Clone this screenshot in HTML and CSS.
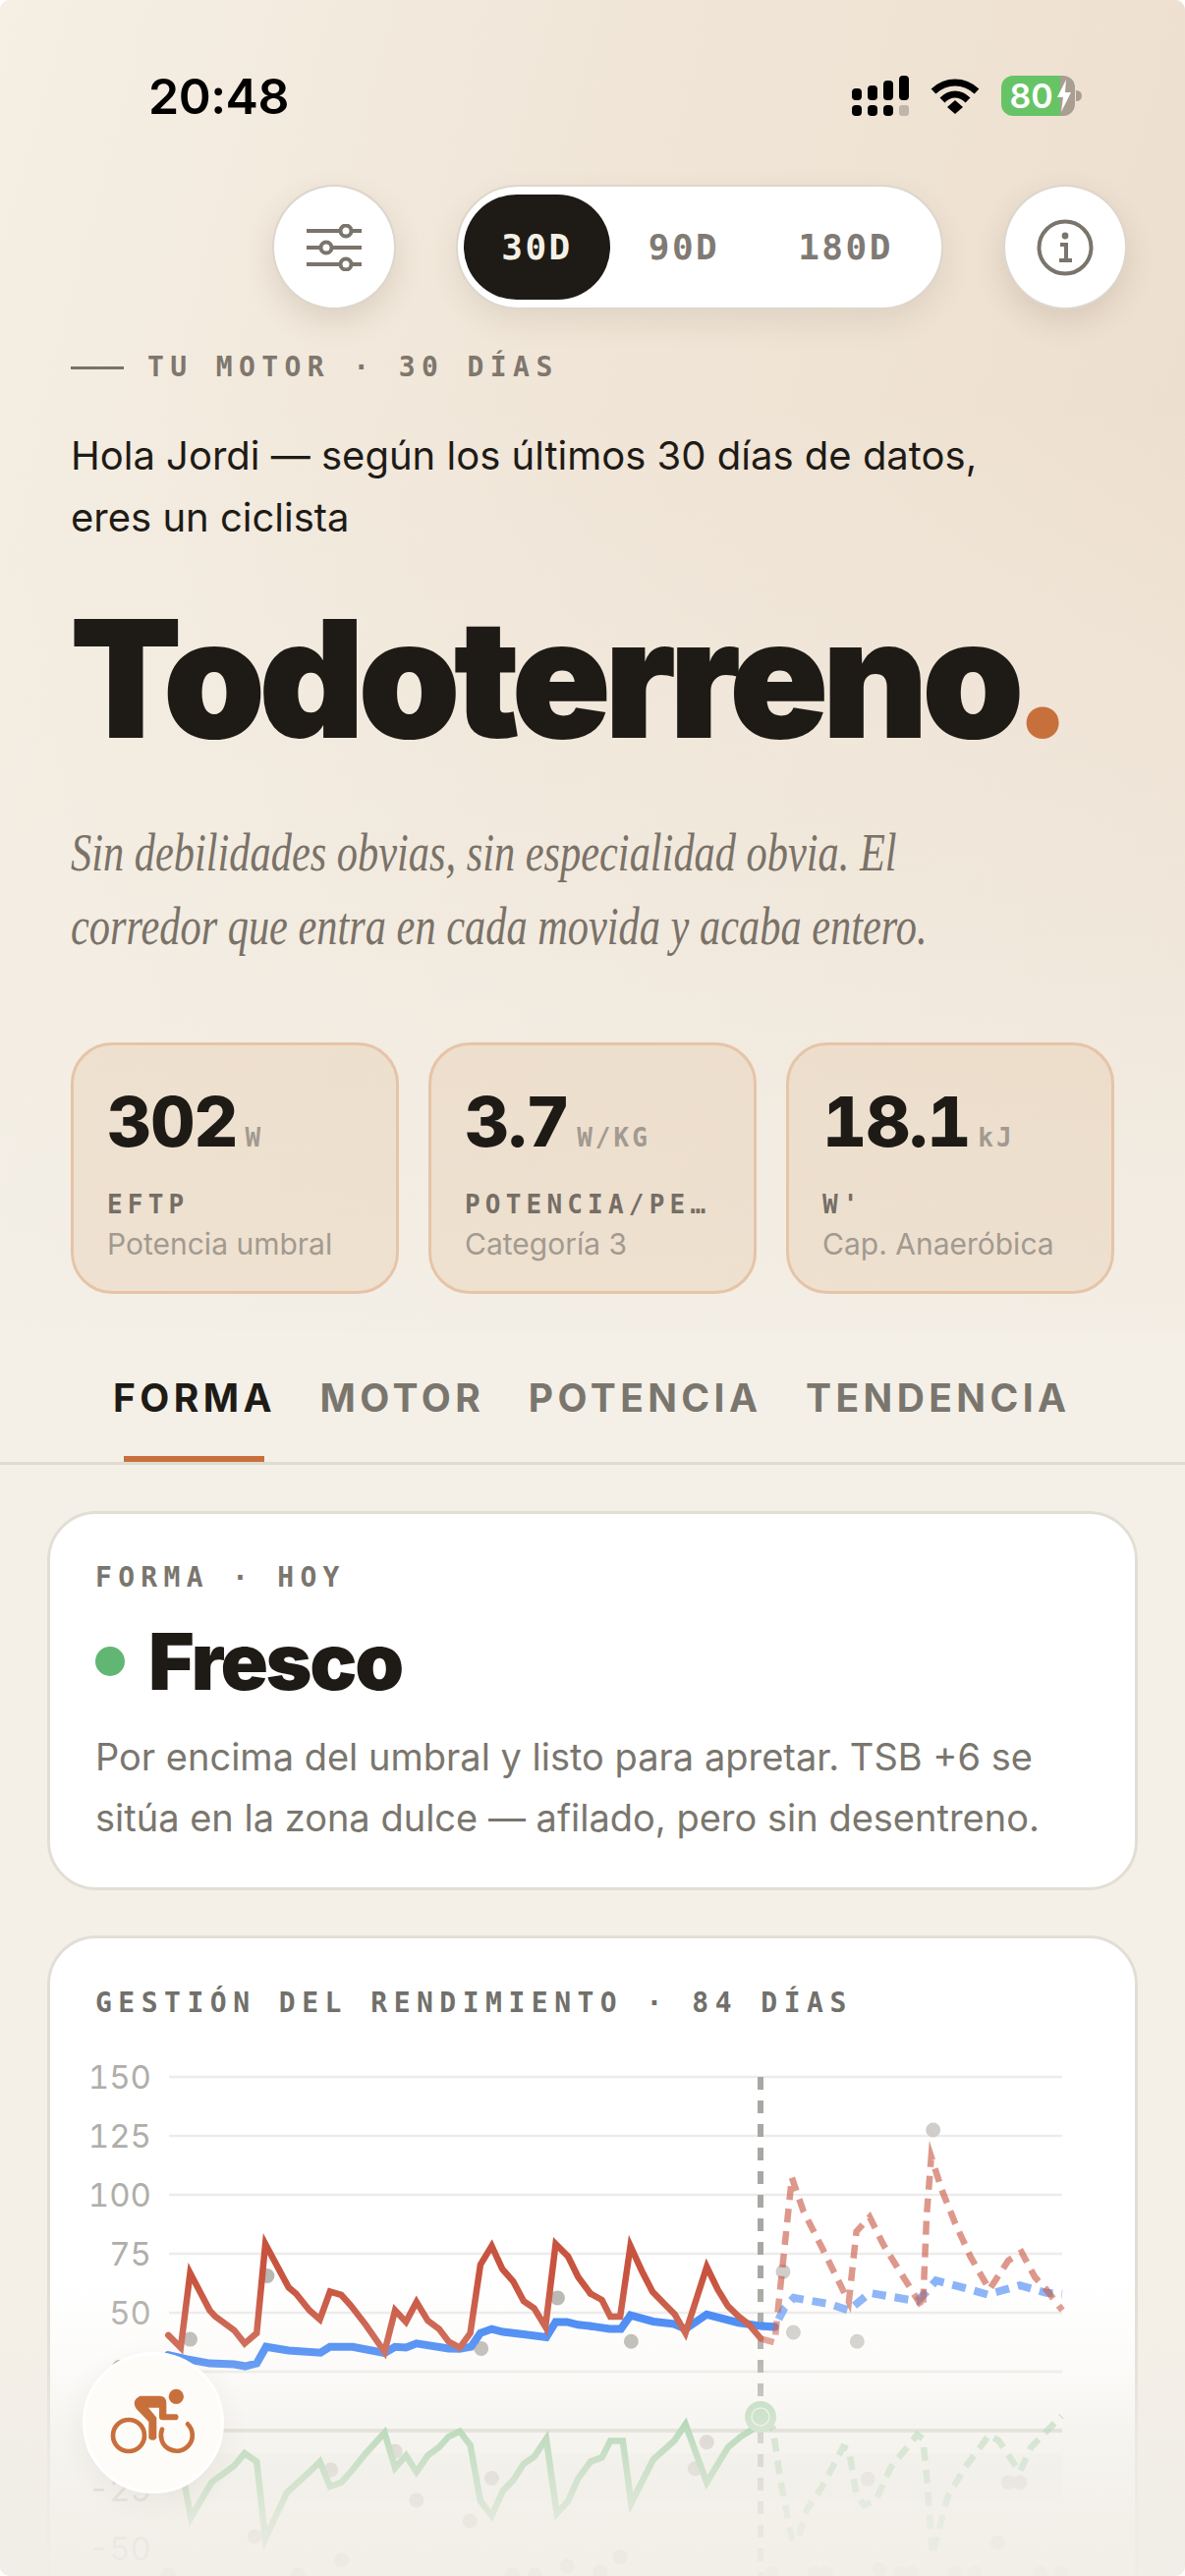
FILE: index.html
```html
<!DOCTYPE html>
<html lang="es">
<head>
<meta charset="utf-8">
<title>Tu motor</title>
<link rel="stylesheet" href="styles.css">
</head>
<body>
<div class="screen">
  <section class="hero">
    <div class="status">
      <span class="time">20:48</span>
      <div class="status-icons">
        <svg class="signal" width="58" height="41" viewBox="0 0 58 41">
          <rect x="0" y="13" width="10" height="12" rx="4"/><rect x="16" y="10" width="10" height="15" rx="4"/><rect x="32" y="5" width="10" height="20" rx="4"/><rect x="48" y="0" width="10" height="25" rx="4"/>
          <rect x="0" y="30" width="10" height="11" rx="4"/><rect x="16" y="30" width="10" height="11" rx="4"/><rect x="32" y="30" width="10" height="11" rx="4"/><rect class="signal-off" x="48" y="30" width="10" height="11" rx="3"/>
        </svg>
        <svg class="wifi" width="50" height="38" viewBox="0 0 50 38">
          <path d="M3 14C16 2 34 2 47 14" /><path d="M12 23C20 15 30 15 38 23"/><path class="wifi-dot" d="M17 30L25 23L33 30L25 37Z"/>
        </svg>
        <div class="battery">
          <span class="battery-num">80</span>
          <svg class="bolt" width="14" height="33" viewBox="0 0 14 33"><path d="M9 0L0 18H6L4 33L14 13H8Z"/></svg>
          <i class="battery-tip"></i>
        </div>
      </div>
    </div>

    <div class="controls">
      <button class="round-btn" aria-label="Filtros">
        <svg width="58" height="48" viewBox="0 0 58 48">
          <path class="ico" d="M1 7H35M47 7H57M1 24H15M27 24H57M1 41H35M47 41H57"/>
          <circle class="ico" cx="41" cy="7" r="5.5"/><circle class="ico" cx="21" cy="24" r="5.5"/><circle class="ico" cx="41" cy="41" r="5.5"/>
        </svg>
      </button>
      <div class="segment">
        <span class="seg seg-active">30D</span>
        <span class="seg seg-90">90D</span>
        <span class="seg seg-180">180D</span>
      </div>
      <button class="round-btn" aria-label="Información">
        <svg width="58" height="58" viewBox="0 0 58 58">
          <circle class="ico" cx="29" cy="29" r="26.5"/>
          <circle class="ico-fill" cx="29" cy="17" r="3.4"/>
          <path class="ico" d="M24 26H30V41M23 42H36"/>
        </svg>
      </button>
    </div>

    <div class="eyebrow"><i class="eyebrow-line"></i><span>TU MOTOR · 30 DÍAS</span></div>
    <p class="intro">Hola Jordi — según los últimos 30 días de datos,<br>eres un ciclista</p>
    <h1 class="title">Todoterreno<span class="title-dot">.</span></h1>
    <p class="tagline"><span class="tag-line">Sin debilidades obvias, sin especialidad obvia. El</span><br><span class="tag-line">corredor que entra en cada movida y acaba entero.</span></p>

    <div class="stats">
      <div class="stat">
        <div class="stat-value">302<span class="stat-unit">W</span></div>
        <div class="stat-label">EFTP</div>
        <div class="stat-sub">Potencia umbral</div>
      </div>
      <div class="stat">
        <div class="stat-value">3.7<span class="stat-unit">W/KG</span></div>
        <div class="stat-label">POTENCIA/PE…</div>
        <div class="stat-sub">Categoría 3</div>
      </div>
      <div class="stat">
        <div class="stat-value">18.1<span class="stat-unit">kJ</span></div>
        <div class="stat-label">W'</div>
        <div class="stat-sub">Cap. Anaeróbica</div>
      </div>
    </div>
  </section>

  <nav class="tabs">
    <span class="tab tab-active">FORMA</span>
    <span class="tab">MOTOR</span>
    <span class="tab">POTENCIA</span>
    <span class="tab">TENDENCIA</span>
  </nav>

  <main class="content">
    <article class="card card-form">
      <div class="card-kicker">FORMA · HOY</div>
      <div class="form-head"><i class="form-dot"></i><h2 class="form-title">Fresco</h2></div>
      <p class="form-text">Por encima del umbral y listo para apretar. TSB +6 se<br>sitúa en la zona dulce — afilado, pero sin desentreno.</p>
    </article>

    <article class="card card-chart">
      <div class="chart-title">GESTIÓN DEL RENDIMIENTO · 84 DÍAS</div>
      <svg class="chart" width="1106" height="560" viewBox="50 2090 1106 560">
        <rect class="zone" x="171" y="2498" width="909" height="49"/>
        <g class="grid">
          <path d="M171 2115H1080M171 2175H1080M171 2235H1080M171 2295H1080M171 2355H1080M171 2415H1080"/>
        </g>
        <path class="zero" d="M171 2475H1080"/>
        <g class="ylab">
          <text x="153" y="2127">150</text><text x="153" y="2187">125</text><text x="153" y="2247">100</text><text x="153" y="2307">75</text><text x="153" y="2367">50</text><text x="153" y="2427">25</text><text x="153" y="2487">0</text><text x="153" y="2547">-25</text><text x="153" y="2607">-50</text>
        </g>
        <path class="today" d="M773 2115V2640"/>

        <g transform="translate(0 1960) scale(.3827 .42212)">
          <path class="dots dots-past" d="M503 1000h.01M708 847h.01M1480 900h.01M1277 1022h.01M380 1090h.01M1048 1270h.01M877 1315h.01M1105 1388h.01M1305 1335h.01M1247 1438h.01M675 1475h.01M905 1532h.01M1505 1547h.01M1360 1568h.01M1420 1568h.01M790 1568h.01M445 1568h.01"/>
          <polyline class="ln ln-green" points="445,1230 478,1300 505,1430 560,1345 620,1305 648,1275 680,1295 703,1480 760,1370 820,1320 848,1295 875,1355 905,1345 930,1320 970,1275 1020,1225 1048,1310 1077,1280 1105,1320 1135,1280 1165,1260 1190,1235 1220,1222 1248,1255 1275,1390 1305,1425 1335,1365 1362,1340 1390,1300 1418,1283 1450,1240 1478,1420 1508,1390 1535,1335 1568,1295"/>
          <polyline class="ln ln-blue" points="445,1038 495,1048 555,1058 620,1060 650,1065 680,1058 705,1018 765,1027 850,1032 875,1018 935,1018 1020,1033 1048,1018 1077,1020 1105,1010 1190,1022 1220,1023 1250,1018 1275,985 1305,975 1335,982 1390,988 1450,995 1475,958 1505,958 1535,965 1568,968"/>
          <polyline class="ln ln-red" points="445,990 478,1020 503,840 555,930 570,945 620,978 648,1010 680,985 703,770 765,875 785,890 820,930 848,952 875,885 905,893 930,918 970,965 1020,1030 1048,930 1077,958 1105,910 1135,955 1165,975 1190,1005 1220,1020 1248,985 1275,820 1305,775 1333,830 1362,860 1390,908 1418,925 1448,970 1475,770 1508,800 1535,850 1568,890"/>
        </g>
        <g transform="translate(600 1960) scale(.38655 .42212)">
          <path class="dots dots-past" d="M107 1005h.01M306 1248h.01M275 1312h.01M78 1525h.01M25 1560h.01"/>
          <path class="dots dots-future" d="M507 837h.01M534 983h.01M702 1005h.01M902 495h.01M730 1337h.01M1100 1345h.01M1130 1345h.01M1072 1490h.01M478 1565h.01M590 1565h.01M620 1565h.01M760 1555h.01M815 1565h.01M845 1565h.01M958 1565h.01M1012 1565h.01M1185 1565h.01M1240 1565h.01"/>
          <polyline class="ln ln-green" points="0,1295 30,1285 52,1245 85,1245 107,1395 165,1290 220,1245 250,1205 306,1345 362,1260 395,1235 448,1205"/>
          <polyline class="ln ln-blue" points="0,968 50,975 80,975 105,942 165,957 220,963 250,975 306,940 390,960 448,968 485,970"/>
          <polyline class="ln ln-red" points="0,890 30,905 52,945 78,945 105,775 135,835 163,885 195,915 222,940 250,985 306,825 335,880 362,920 390,945 418,965 448,998"/>
          <polyline class="ln ln-green ln-dash" points="448,1205 480,1215 500,1340 530,1480 545,1485 570,1410 610,1355 665,1260 680,1265 700,1375 720,1400 750,1390 790,1310 860,1230 875,1240 885,1330 900,1520 940,1380 985,1310 1050,1230 1075,1245 1130,1320 1160,1260 1240,1185"/>
          <polyline class="ln ln-blue ln-dash" points="448,968 485,970 510,925 535,900 630,915 680,930 735,888 860,908 885,885 910,858 1000,880 1045,892 1130,870 1200,888 1242,890"/>
          <polyline class="ln ln-red ln-dash" points="448,998 485,1008 490,960 530,610 560,690 610,780 680,910 700,740 735,705 770,770 800,815 875,925 885,700 897,560 925,640 960,720 1000,800 1050,880 1100,810 1135,790 1170,850 1200,880 1242,930"/>
        </g>
        <circle class="mark" cx="773" cy="2461" r="16"/>
        <circle class="mark-ring" cx="773" cy="2461" r="9"/>
      </svg>
    </article>
  </main>

  <div class="fade"></div>

  <button class="bike-btn" aria-label="Ciclismo">
    <svg width="94" height="70" viewBox="150 150 280 210">
      <circle class="bike-head" cx="360" cy="178" r="23"/>
      <path class="bike-body" d="M250 176H308Q330 176 330 198V232H362Q372 240 362 250H318Q308 250 308 240V212H275L300 242V305Q288 318 276 305V255L238 215Q222 190 250 176Z"/>
      <circle class="bike-wheel" cx="215" cy="297" r="48"/>
      <path class="bike-wheel" d="M395 262A48 48 0 1 1 317 278"/>
    </svg>
  </button>
</div>
</body>
</html>
```

FILE: styles.css
```css
* { box-sizing: border-box; }
html, body { margin: 0; padding: 0; background: #fff; }
body { width: 1206px; height: 2622px; overflow: hidden; font-family: "Inter", "Liberation Sans", sans-serif; color: #1e1b16; }

.screen { position: relative; width: 1206px; height: 2622px; overflow: hidden; border-radius: 10px; background: #f4f0e8; }

.hero {
  height: 1355px;
  padding: 0 72px;
  background:
    linear-gradient(to bottom, rgba(244,240,232,0) 30%, rgba(244,240,232,.88) 100%),
    linear-gradient(105deg, #f5efe4 0%, #f0e5d7 45%, #ecddcc 100%);
}

.status { display: flex; justify-content: space-between; padding-left: 79px; padding-top: 70px; height: 188px; }
.time { font-size: 50px; line-height: 56px; font-weight: 600; color: #000; letter-spacing: -.5px; }
.status-icons { display: flex; align-items: flex-start; gap: 22px; padding-top: 7px; margin-right: 40px; }
.signal { fill: #000; flex: none; }
.signal-off { fill: #bfb5aa; }
.wifi { flex: none; margin-top: 2px; fill: none; stroke: #000; stroke-width: 7; }
.wifi-dot { fill: #000; stroke: none; }
.battery { position: relative; flex: none; display: flex; align-items: center; justify-content: center; width: 75px; height: 41px; border-radius: 12px; background: linear-gradient(to right, #67c466 80%, #a89e92 80%); color: #fff; padding-right: 14px; }
.battery-num { font-size: 34px; line-height: 41px; font-weight: 600; }
.bolt { position: absolute; right: 4px; top: 4px; fill: #fff; }
.battery-tip { position: absolute; right: -7px; top: 15px; width: 6px; height: 11px; border-radius: 0 6px 6px 0; background: #a89e92; }

.controls { display: flex; gap: 61px; margin-left: 205px; margin-right: -12px; height: 127px; }
.round-btn { flex: none; display: flex; align-items: center; justify-content: center; width: 126px; height: 127px; padding: 0; border: 2px solid #ddd6cc; border-radius: 50%; background: #fff; box-shadow: 0 12px 30px rgba(90,65,40,.14); }
.ico { fill: none; stroke: #7a746c; stroke-width: 4; }
.ico-fill { fill: #7a746c; }

.segment { position: relative; flex: none; display: flex; width: 496px; height: 127px; border: 2px solid #ddd6cc; border-radius: 64px; background: #fff; box-shadow: 0 12px 30px rgba(90,65,40,.10); padding: 8px 6px; font-family: "DejaVu Sans Mono", "Liberation Mono", monospace; font-weight: 700; font-size: 36px; color: #7f7a74; letter-spacing: 2.5px; }
.seg { display: flex; align-items: center; justify-content: center; height: 107px; }
.seg-active { width: 149px; border-radius: 54px; background: #1e1b16; color: #f5f0e6; }
.seg-90 { width: 150px; }
.seg-180 { width: 179px; }

.eyebrow { display: flex; align-items: center; gap: 24px; margin-top: 42px; height: 34px; font-family: "DejaVu Sans Mono", "Liberation Mono", monospace; font-size: 28px; line-height: 34px; letter-spacing: 6.4px; color: #7f776d; font-weight: 700; }
.eyebrow-line { display: block; width: 54px; height: 3px; background: #7a7268; }

.intro { margin: 41px 0 0; font-size: 40px; line-height: 63px; font-weight: 400; color: #1e1b16; }

.title { margin: 38px 0 0; font-size: 164px; line-height: 190px; font-weight: 900; letter-spacing: -5px; color: #1e1b16; white-space: nowrap; -webkit-text-stroke: 2px #1e1b16; }
.title-dot { margin-left: -6px; color: #c8703c; -webkit-text-stroke: 0; }

.tagline { margin: 45px 0 0; font-family: "Liberation Serif", serif; font-style: italic; font-size: 54px; line-height: 75px; color: #7a7268; white-space: nowrap; }
.tag-line { display: inline-block; transform-origin: left center; transform: scaleX(.785); }

.stats { display: grid; grid-template-columns: repeat(3, 334px); gap: 30px; margin-top: 80px; }
.stat { height: 256px; padding: 36px 20px 0 34px; border: 3px solid #e6c4a8; border-radius: 42px; background: rgba(230,200,170,.35); }
.stat-value { display: flex; align-items: baseline; gap: 8px; font-size: 70px; line-height: 84px; font-weight: 800; letter-spacing: -1px; color: #1e1b16; font-variant-numeric: tabular-nums; }
.stat-unit { font-family: "DejaVu Sans Mono", "Liberation Mono", monospace; font-size: 26px; font-weight: 700; letter-spacing: 3px; color: #a29a90; }
.stat-label { margin-top: 11px; font-family: "DejaVu Sans Mono", "Liberation Mono", monospace; font-size: 26px; line-height: 30px; font-weight: 700; letter-spacing: 5.2px; color: #756e66; white-space: nowrap; }
.stat-sub { margin-top: 5px; font-size: 30px; line-height: 40px; color: #a29a90; white-space: nowrap; }

.tabs { position: relative; display: flex; gap: 44.6px; height: 136px; padding: 45px 0 0 115px; border-bottom: 3px solid #dfdbd3; font-size: 39px; line-height: 46px; font-weight: 700; letter-spacing: 4.4px; color: #7a766e; white-space: nowrap; }
.tab-active { color: #1e1b16; position: relative; }
.tab-active::after { content: ""; position: absolute; left: 11px; bottom: 0; width: 143px; height: 6px; background: #c8703c; }

.content { padding: 47px 48px 0; display: flex; flex-direction: column; gap: 46px; }
.card { border: 3px solid #e2ded6; border-radius: 50px; background: #fff; }
.card-form { height: 386px; padding: 48px 46px 0; }
.card-kicker { font-family: "DejaVu Sans Mono", "Liberation Mono", monospace; font-size: 28px; line-height: 34px; font-weight: 700; letter-spacing: 6.3px; color: #7a766e; }
.form-head { display: flex; align-items: center; gap: 24px; margin-top: 21px; height: 94px; }
.form-dot { display: block; width: 30px; height: 30px; border-radius: 50%; background: #62b673; }
.form-title { margin: 0; font-size: 80px; line-height: 94px; font-weight: 900; letter-spacing: -2.3px; color: #1e1b16; }
.form-text { margin: 19px 0 0; font-size: 38px; line-height: 62px; color: #7a766e; white-space: nowrap; }

.card-chart { height: 800px; padding-top: 49px; }
.chart-title { margin-left: 46px; font-family: "DejaVu Sans Mono", "Liberation Mono", monospace; font-size: 28px; line-height: 34px; font-weight: 700; letter-spacing: 6.5px; color: #72706b; white-space: nowrap; }
.chart { display: block; margin-top: 33px; overflow: visible; }
.grid path { fill: none; stroke: #eeecea; stroke-width: 2.5; }
.zero { fill: none; stroke: #d3cfc9; stroke-width: 4; }
.zone { fill: rgba(120,120,80,.06); }
.ylab text { font-family: "Inter", "Liberation Sans", sans-serif; font-size: 33px; fill: #b0aeaa; text-anchor: end; font-variant-numeric: tabular-nums; }
.today { fill: none; stroke: #a9a7a3; stroke-width: 6; stroke-dasharray: 13 11; }
.ln { fill: none; stroke-width: 6.5; stroke-linejoin: miter; stroke-miterlimit: 12; stroke-linecap: round; vector-effect: non-scaling-stroke; }
.ln-red { stroke: #c8543f; }
.ln-blue { stroke: #3b82f6; stroke-width: 8; }
.ln-green { stroke: #66bb78; }
.ln-dash { stroke-dasharray: 14 9; stroke-linecap: butt; opacity: .6; }
.dots { fill: none; stroke-width: 15; stroke-linecap: round; vector-effect: non-scaling-stroke; }
.dots-past { stroke: #b9b7b1; }
.dots-future { stroke: #d0cecb; }
.mark { fill: #a9d6ae; }
.mark-ring { fill: none; stroke: #e8f1e6; stroke-width: 1.5; }

.fade { position: absolute; left: 0; right: 0; top: 2320px; height: 302px; pointer-events: none;
  background: linear-gradient(to bottom, rgba(241,238,231,0) 0%, rgba(241,238,231,.22) 27%, rgba(241,238,231,.65) 53%, rgba(241,238,231,.88) 80%, rgba(241,238,231,.94) 100%); }

.bike-btn { position: absolute; left: 84px; top: 2394px; display: flex; align-items: center; justify-content: center; width: 144px; height: 144px; padding: 0 0 2px 0; border: 3px solid #fff; border-radius: 50%; background: #fdfcf8; box-shadow: 0 8px 30px rgba(60,50,30,.06); }
.bike-head { fill: #c8703c; }
.bike-body { fill: #c8703c; }
.bike-wheel { fill: none; stroke: #c8703c; stroke-width: 14; stroke-linecap: round; }
```
